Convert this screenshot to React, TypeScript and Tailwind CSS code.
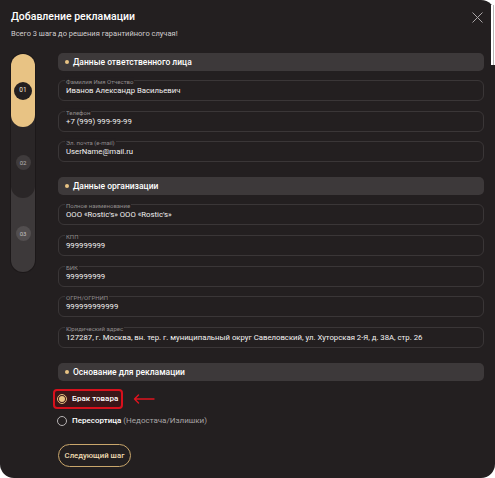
import React from 'react';

function Field({ label, value }: { label: string; value: string }) {
    return (
        <div className="relative h-[21px] border border-[#3a3637] rounded-[6px] flex items-center px-[7px]">
            <span className="absolute left-[6px] top-0 -translate-y-1/2 bg-[#231f20] px-[1px] text-[6px] leading-[7px] text-[#8f8b8c] whitespace-nowrap">
                {label}
            </span>
            <span className="pt-[1px] text-[7.75px] leading-[10px] text-[#f4f2f2] whitespace-nowrap">{value}</span>
        </div>
    );
}

function SectionHeader({ title }: { title: string }) {
    return (
        <div className="h-[18px] rounded-[5px] bg-[#3d393a] flex items-center pl-[7px] gap-[4px]">
            <div className="w-[4px] h-[4px] rounded-full bg-[#e8c384]" />
            <span className="text-[8.5px] leading-[12px] font-medium text-white">{title}</span>
        </div>
    );
}

function Stepper() {
    return (
        <div className="w-[24px] h-[218px] rounded-full bg-[#3d393a] flex flex-col shadow-[0_0_0_1px_#1c1819]">
            <div className="h-[144px] rounded-full bg-[#2a2627] flex flex-col">
                <div className="h-[73px] rounded-full bg-[#e8c384] flex items-center justify-center">
                    <div className="w-[18px] h-[18px] rounded-full bg-[#231f20] flex items-center justify-center text-[6.5px] text-[#f3ead8]">01</div>
                </div>
                <div className="flex-1 flex items-center justify-center">
                    <div className="w-[15px] h-[15px] rounded-full bg-[#3f3b3c] flex items-center justify-center text-[6px] text-[#b9b5b6]">02</div>
                </div>
            </div>
            <div className="flex-1 flex items-center justify-center pb-[3px]">
                <div className="w-[15px] h-[15px] rounded-full bg-[#524e4f] flex items-center justify-center text-[6px] text-[#c4c0c1]">03</div>
            </div>
        </div>
    );
}

export default function App() {
    return (
        <div className="w-[495px] h-[478px] bg-white relative overflow-hidden" style={{ fontFamily: 'Roboto, "Noto Sans", sans-serif' }}>
            <div className="h-full bg-[#231f20] rounded-tr-[14px] rounded-b-[14px] px-[11px] pt-[9px]">
                <div className="flex justify-between">
                    <div>
                        <h1 className="text-[10.5px] leading-[16px] font-medium text-white">Добавление рекламации</h1>
                        <p className="mt-[4px] text-[7.5px] leading-[10px] text-[#d2cecf]">Всего 3 шага до решения гарантийного случая!</p>
                    </div>
                    <button className="mt-[3px] mr-[1px] w-[11px] h-[11px] text-[#a9a5a6]">
                        <svg viewBox="0 0 11 11" width="11" height="11" fill="none" stroke="currentColor" strokeWidth="1">
                            <path d="M0.5 0.5L10.5 10.5M10.5 0.5L0.5 10.5" />
                        </svg>
                    </button>
                </div>

                <div className="flex gap-[23px] mt-[14px]">
                    <div className="pt-[1px]">
                        <Stepper />
                    </div>

                    <div className="w-[426px] flex flex-col">
                        <SectionHeader title="Данные ответственного лица" />
                        <div className="flex flex-col gap-[9.5px] mt-[9px]">
                            <Field label="Фамилия Имя Отчество" value="Иванов Александр Васильевич" />
                            <Field label="Телефон" value="+7 (999) 999-99-99" />
                            <Field label="Эл. почта (e-mail)" value="UserName@mail.ru" />
                        </div>

                        <div className="mt-[15px]">
                            <SectionHeader title="Данные организации" />
                        </div>
                        <div className="flex flex-col gap-[9.75px] mt-[9px]">
                            <Field label="Полное наименование" value="ООО «Rostic's» ООО «Rostic's»" />
                            <Field label="КПП" value="999999999" />
                            <Field label="БИК" value="999999999" />
                            <Field label="ОГРН/ОГРНИП" value="999999999999" />
                            <Field label="Юридический адрес" value="127287, г. Москва, вн. тер. г. муниципальный округ Савеловский, ул. Хуторская 2-Я, д. 38А, стр. 26" />
                        </div>

                        <div className="mt-[15px]">
                            <SectionHeader title="Основание для рекламации" />
                        </div>

                        <div className="mt-[8px] flex items-center">
                            <div className="-ml-[5px] w-[70px] h-[20px] border-2 border-[#d8101c] rounded-[4px] bg-[#3a1618] flex items-center pl-[2px] gap-[5px]">
                                <div className="w-[10px] h-[10px] rounded-full border border-[#e3bd7c] flex items-center justify-center">
                                    <div className="w-[6px] h-[6px] rounded-full bg-[#e8c384]" />
                                </div>
                                <span className="text-[8px] leading-[10px] font-medium text-white whitespace-nowrap">Брак товара</span>
                            </div>
                            <svg className="ml-[10px]" width="22" height="10" viewBox="0 0 22 10" fill="none" stroke="#e0141e" strokeWidth="1.4" strokeLinecap="round" strokeLinejoin="round">
                                <path d="M21 5H1.5M5.5 1L1.5 5L5.5 9" />
                            </svg>
                        </div>

                        <div className="mt-[7px] flex items-center gap-[5px] -ml-[1px]">
                            <div className="w-[10px] h-[10px] rounded-full border border-[#b7b3b4]" />
                            <span className="text-[8px] leading-[10px] font-medium text-white whitespace-nowrap">
                                Пересортица <span className="font-normal text-[#a9a5a6]">(Недостача/Излишки)</span>
                            </span>
                        </div>

                        <button className="mt-[18px] self-start h-[23px] w-[73px] rounded-full border border-[#c9a66b] text-[7.75px] font-medium text-[#f0dcb2]">
                            Следующий шаг
                        </button>
                    </div>
                </div>
            </div>

            <div className="absolute top-[5px] right-0 w-[4px] h-[60px] bg-white flex justify-center">
                <div className="w-[1px] h-full bg-[#b5b5b5]" />
            </div>
        </div>
    );
}
